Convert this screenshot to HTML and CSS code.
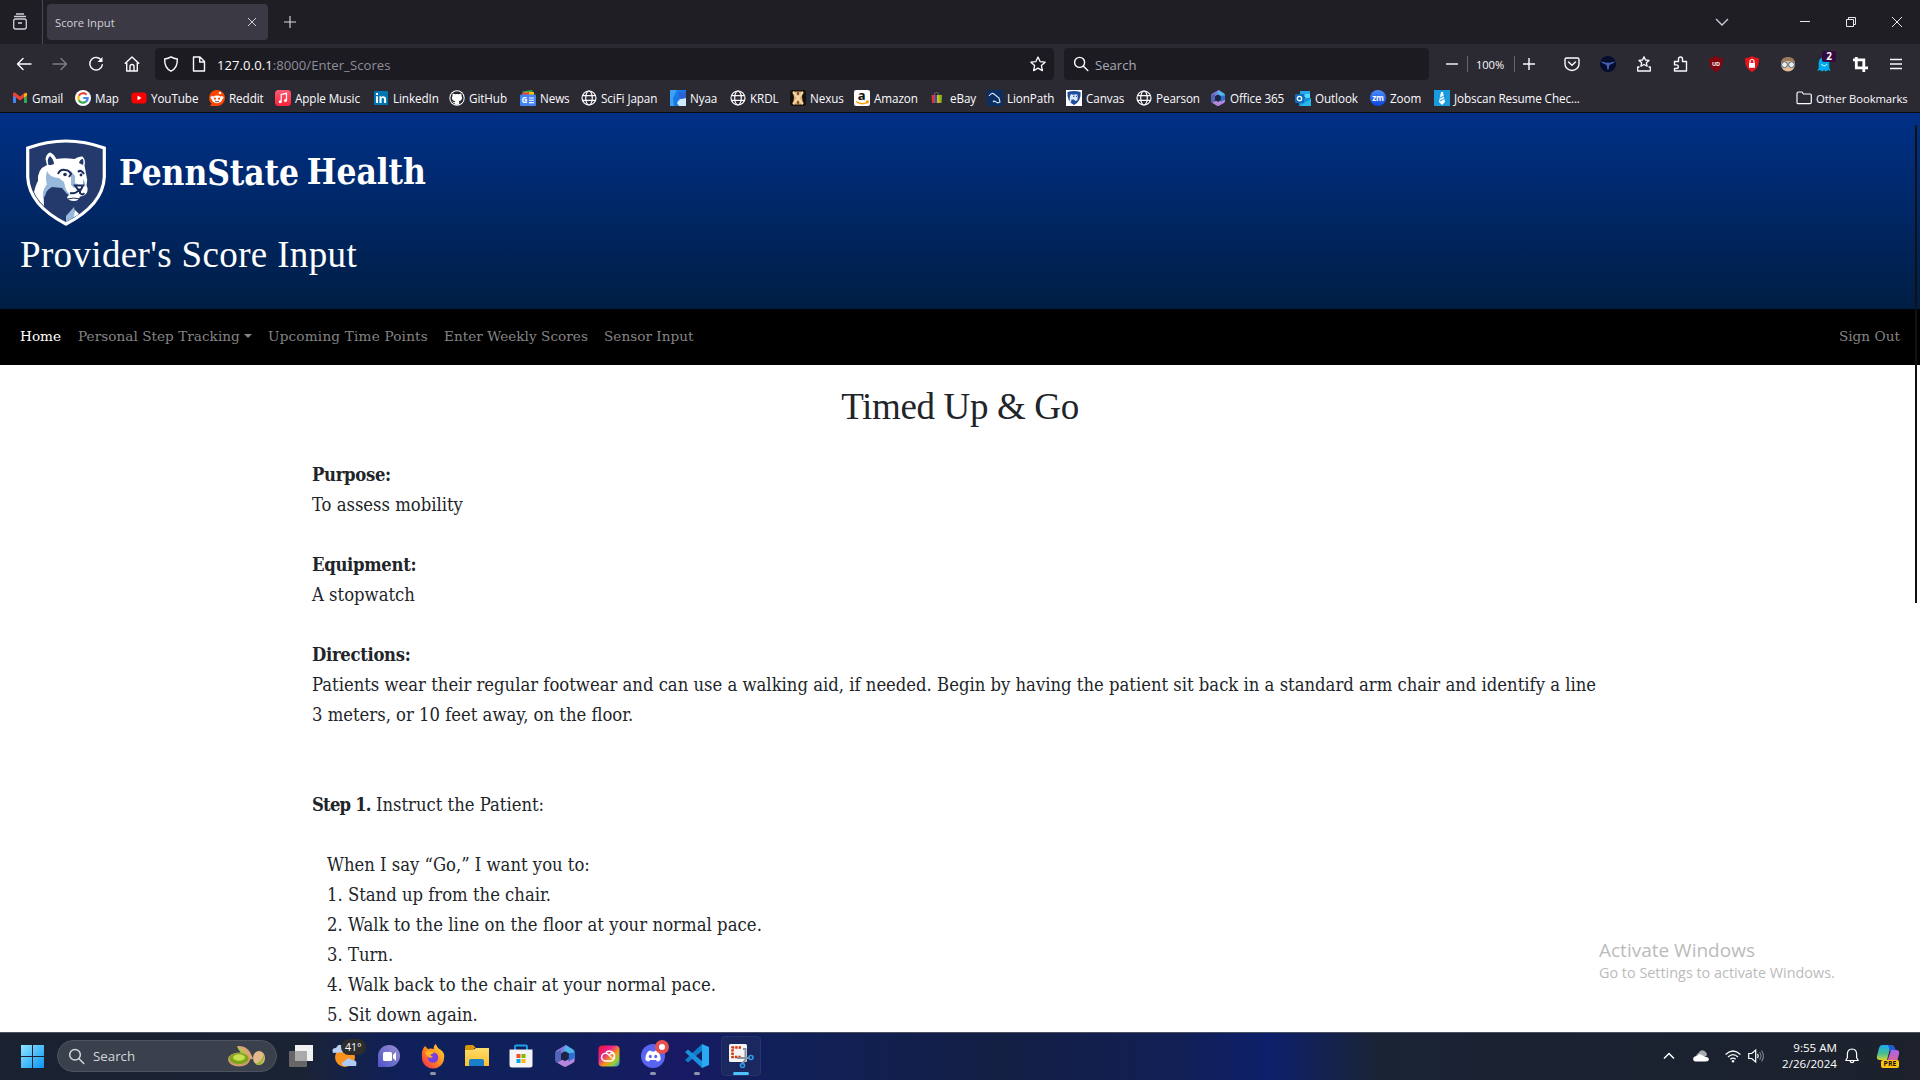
FILE: index.html
```html
<!DOCTYPE html>
<html lang="en">
<head>
<meta charset="utf-8">
<title>Score Input</title>
<link rel="stylesheet" href="styles.css">
</head>
<body>
<svg class="defs" width="0" height="0">
  <defs>
    <linearGradient id="gWin" x1="0" y1="0" x2="1" y2="1"><stop offset="0" stop-color="#8fe6ff"/><stop offset="1" stop-color="#0a93f5"/></linearGradient>
    <linearGradient id="gChat" x1="1" y1="0" x2="0" y2="1"><stop offset="0" stop-color="#9a8fd0"/><stop offset="1" stop-color="#4c55c8"/></linearGradient>
    <linearGradient id="gFox" x1="1" y1="0" x2="0" y2="1"><stop offset="0" stop-color="#ffe23c"/><stop offset=".5" stop-color="#ff8a1d"/><stop offset="1" stop-color="#f5205a"/></linearGradient>
    <linearGradient id="gFold" x1="0" y1="0" x2="0" y2="1"><stop offset="0" stop-color="#ffdc6b"/><stop offset="1" stop-color="#fbbf2d"/></linearGradient>
    <linearGradient id="gCC" x1="0" y1="0" x2="1" y2="1"><stop offset="0" stop-color="#f0122d"/><stop offset=".35" stop-color="#e8238e"/><stop offset=".6" stop-color="#f59a1b"/><stop offset=".8" stop-color="#8ed13a"/><stop offset="1" stop-color="#2f7df0"/></linearGradient>
    <linearGradient id="gAM" x1="0" y1="0" x2="0" y2="1"><stop offset="0" stop-color="#fb5c74"/><stop offset="1" stop-color="#fa233b"/></linearGradient>
    <linearGradient id="gZm" x1="0" y1="0" x2="0" y2="1"><stop offset="0" stop-color="#4a8dff"/><stop offset="1" stop-color="#0b45dd"/></linearGradient>
    <linearGradient id="gCopA" x1="0" y1="0" x2="0" y2="1"><stop offset="0" stop-color="#1ba7f0"/><stop offset=".6" stop-color="#4cc08a"/><stop offset="1" stop-color="#d6d23a"/></linearGradient>
    <linearGradient id="gCopB" x1="0" y1="0" x2="0" y2="1"><stop offset="0" stop-color="#a565f0"/><stop offset="1" stop-color="#f0607a"/></linearGradient>
    <symbol id="globe" viewBox="0 0 16 16"><g fill="none" stroke="#fbfbfe" stroke-width="1.2"><circle cx="8" cy="8" r="7"/><ellipse cx="8" cy="8" rx="3.3" ry="7"/><path d="M1.5 5.6h13M1.5 10.4h13"/></g></symbol>
    <symbol id="m365" viewBox="0 0 16 16"><path d="M8.500 0 2 3.800Q1 4.500 1 6v5q0 1 1 1.500L5 11V6.500L10.500 3V1.200z" fill="#8577dc"/><path d="M8.500 0 14 3.200q1 .8 1 2V9L11 6.500 7 4.500z" fill="#4fb4ea"/><path d="M15 8v3q0 1.200-1 1.900L9 15.700q-1 .5-2 0L2 12.700l4-2 2 1z" fill="#b586dc"/><path d="M1 5.500 5 3.500v7.500L2 12.700Q1 12 1 11z" fill="#5263b8"/><path d="M15 5.500v4L10.500 12V6z" fill="#2b6fd0"/><path d="m5.500 6 2.500-1.500L10.700 6v4L8 11.500 5.500 10z" fill="#1c2547"/></symbol>
    <symbol id="mag" viewBox="0 0 16 16"><g fill="none" stroke="currentColor" stroke-width="1.4" stroke-linecap="round"><circle cx="6.6" cy="6.4" r="5"/><path d="m10.4 10.2 4.4 4.4"/></g></symbol>
  </defs>
</svg>

<header class="chrome">
  <div class="tabstrip">
    <div class="view"><svg width="16" height="18" viewBox="0 0 16 18" fill="none" stroke="#cfcfd8" stroke-width="1.3"><rect x="1.7" y="6" width="12.6" height="10" rx="2"/><path d="M2 3.5h12M4 1h8M6 10h4"/></svg></div>
    <div class="tab"><span>Score Input</span><svg width="10" height="10" viewBox="0 0 10 10" stroke="#cfcfd8"><path d="m1 1 8 8M9 1 1 9"/></svg></div>
    <svg class="newtab" width="12" height="12" viewBox="0 0 12 12" stroke="#dcdce2" stroke-width="1.1"><path d="M6 0v12M0 6h12"/></svg>
    <div class="controls">
      <svg width="14" height="8" viewBox="0 0 14 8" fill="none" stroke="#cfcfd8" stroke-width="1.3"><path d="m1 1 6 6 6-6"/></svg>
      <svg width="10" height="10" viewBox="0 0 10 10" stroke="#e8e8ee"><path d="M0 4.5h10"/></svg>
      <svg width="10" height="10" viewBox="0 0 10 10" fill="none" stroke="#e8e8ee"><path d="M.5 2.5h7v7h-7zM2.5 2.5v-2h7v7h-2"/></svg>
      <svg width="10" height="10" viewBox="0 0 10 10" stroke="#e8e8ee"><path d="m0 0 10 10M10 0 0 10"/></svg>
    </div>
  </div>

  <div class="toolbar">
    <div class="nav-btns">
      <svg width="16" height="16" viewBox="0 0 16 16" fill="none" stroke="#fbfbfe" stroke-width="1.4" stroke-linecap="round" stroke-linejoin="round"><path d="M15 8H1.5M7 2.5 1.5 8 7 13.5"/></svg>
      <svg class="off" width="16" height="16" viewBox="0 0 16 16" fill="none" stroke="#fbfbfe" stroke-width="1.4" stroke-linecap="round" stroke-linejoin="round"><path d="M1 8h13.5M9 2.5 14.5 8 9 13.5"/></svg>
      <svg width="16" height="16" viewBox="0 0 16 16" fill="none" stroke="#fbfbfe" stroke-width="1.4" stroke-linecap="round"><path d="M13.5 4.5a6.3 6.3 0 1 0 .8 4.3"/><path d="M14.5 1v5h-5z" fill="#fbfbfe" stroke="none"/></svg>
      <svg width="16" height="16" viewBox="0 0 16 16" fill="none" stroke="#fbfbfe" stroke-width="1.4" stroke-linejoin="round"><path d="M.8 7.8 8 1l7.200 6.800M2.700 6.500V15h10.600V6.500M6 15v-4.500a2 2 0 0 1 4 0V15"/></svg>
    </div>
    <div class="field url">
      <svg width="16" height="16" viewBox="0 0 16 16" fill="none" stroke="#fbfbfe" stroke-width="1.4"><path d="M8 .8c2 1.300 4 1.900 6.300 2.200.3 5.500-1.800 10-6.300 12.200C3.500 13 1.400 8.500 1.700 3 4 2.700 6 2.100 8 .8z"/></svg>
      <svg width="16" height="16" viewBox="0 0 16 16" fill="none" stroke="#fbfbfe" stroke-width="1.4" stroke-linejoin="round"><path d="M2.500 1h6.500L13.500 5.500V15h-11zM8.700 1.200V6h4.800"/></svg>
      <p>127.0.0.1<span>:8000/Enter_Scores</span></p>
      <svg width="16" height="16" viewBox="0 0 16 16" fill="none" stroke="#fbfbfe" stroke-width="1.300" stroke-linejoin="round"><path d="m8 1 2.100 4.600 5 .6-3.700 3.400 1 5L8 12.100l-4.400 2.500 1-5L.9 6.200l5-.6z"/></svg>
    </div>
    <div class="field find"><svg width="16" height="16"><use href="#mag"/></svg><p>Search</p></div>
    <div class="zoomer">
      <svg width="12" height="12" viewBox="0 0 12 12" stroke="#fbfbfe" stroke-width="1.400"><path d="M0 6h12"/></svg><i></i><b>100%</b><i></i>
      <svg width="12" height="12" viewBox="0 0 12 12" stroke="#fbfbfe" stroke-width="1.400"><path d="M0 6h12M6 0v12"/></svg>
    </div>
    <div class="exts">
      <svg viewBox="0 0 16 16" fill="none" stroke="#fbfbfe" stroke-width="1.400" stroke-linecap="round" stroke-linejoin="round"><path d="M2.500 2h11A1.500 1.500 0 0 1 15 3.500V8A7 6.500 0 0 1 1 8V3.500A1.500 1.500 0 0 1 2.500 2zM4.500 6 8 9.300 11.500 6"/></svg>
      <svg viewBox="0 0 16 16"><circle cx="8" cy="8" r="8" fill="#060d2c"/><path d="M.8 5.500c2.500.3 4.500 1 6 1.500L8 6.300 9.200 7c1.500-.5 3.500-1.200 6-1.500-1.500 1.800-3.500 2.700-5.700 3.200L8.400 14h-.8L6.500 8.700C4.300 8.200 2.300 7.300.8 5.500z" fill="#4361b4"/></svg>
      <svg viewBox="0 0 16 16" fill="none" stroke="#fbfbfe" stroke-width="1.300" stroke-linejoin="round"><path d="m8 .8 1.500 3.200 3.500.4-2.600 2.400.7 3.400L8 8.500l-3.100 1.700.7-3.400L3 4.400 6.500 4zM3.500 11H1.700v4h12.600v-4h-1.800"/></svg>
      <svg viewBox="0 0 16 16" fill="none" stroke="#fbfbfe" stroke-width="1.400" stroke-linejoin="round"><path d="M2.500 5.500h4V3a2 2 0 0 1 4 0v2.500h4V15h-12v-2.500h2a1.800 1.800 0 0 0 0-3.600h-2z"/></svg>
      <svg viewBox="0 0 16 16"><path d="M8 0c2.300 1.400 4.500 2 7 2.200C15 9 13 13.500 8 16 3 13.500 1 9 1 2.200 3.500 2 5.700 1.400 8 0z" fill="#800610"/><text x="8" y="10" class="ub">UD</text></svg>
      <svg viewBox="0 0 16 16"><path d="M8 0c2.300 1.400 4.500 2 7 2.200C15 9 13 13.500 8 16 3 13.500 1 9 1 2.200 3.500 2 5.700 1.400 8 0z" fill="#e8141c"/><rect x="5" y="7" width="6" height="4.800" fill="#fff"/><path d="M6 7V5.500a2 2 0 0 1 4 0V7" fill="none" stroke="#fff" stroke-width="1.200"/></svg>
      <svg viewBox="0 0 16 16"><circle cx="8" cy="8.500" r="7" fill="#e8bc96"/><path d="M1 7.500C1 3 4 1 8 1s7 2 7 6.500L12 5H5z" fill="#9a7c5c"/><circle cx="4.500" cy="8.700" r="2.900" fill="#e9f2f6" stroke="#53636e"/><circle cx="11.500" cy="8.700" r="2.900" fill="#e9f2f6" stroke="#53636e"/></svg>
      <div class="ghost"><svg viewBox="0 0 16 16"><path d="M8 1.500c4 0 5.300 2.500 5.300 6.500V12l1.500 3-2.800-1-2 1.500-2-1.300-2 1.300L4 14l-2.800 1 1.500-3V8c0-4 1.300-6.500 5.300-6.500z" fill="#00aef0"/><path d="M5.500 8c1.500 2.500 4 2.500 5.500 0" fill="none" stroke="#fff"/></svg><em>2</em></div>
      <svg viewBox="0 0 16 16" fill="none" stroke="#fff" stroke-width="2.800"><path d="M1 3.800h10.800V16M4.300 1v10.800H16"/></svg>
      <svg viewBox="0 0 16 16" stroke="#fbfbfe" stroke-width="1.300"><path d="M2 3.500h12M2 8h12M2 12.500h12"/></svg>
    </div>
  </div>

  <div class="bookmarks">
    <a><svg viewBox="0 0 16 16"><path d="M1 3.500h3V13H1z" fill="#4285f4"/><path d="M12 3.500h3V13h-3z" fill="#34a853"/><path d="M1 3 3 2.500l5 4 5-4L15 3v2.500L8 10.500 1 5.500z" fill="#ea4335"/><path d="M12 4v3.500l3-2V3z" fill="#fbbc04"/></svg>Gmail</a>
    <a><svg viewBox="0 0 16 16"><circle cx="8" cy="8" r="8" fill="#fff"/><g fill="none" stroke-width="2.200"><path d="M11.500 4.700A4.700 4.700 0 0 0 3.900 5.800" stroke="#ea4335"/><path d="M3.900 5.800a4.700 4.700 0 0 0 0 4.400" stroke="#fbbc04"/><path d="M3.900 10.200a4.700 4.700 0 0 0 7 1.500" stroke="#34a853"/><path d="M10.900 11.700A4.700 4.700 0 0 0 12.700 8H8.200" stroke="#4285f4"/></g></svg>Map</a>
    <a><svg viewBox="0 0 16 16"><rect x=".5" y="2.500" width="15" height="11" rx="3" fill="#f00"/><path d="m6.500 5.600 4 2.400-4 2.400z" fill="#fff"/></svg>YouTube</a>
    <a><svg viewBox="0 0 16 16"><path d="M8 0a8 8 0 1 1 0 16H1l1.500-2.300A8 8 0 0 1 8 0z" fill="#ff4500"/><ellipse cx="8" cy="9.300" rx="5.200" ry="3.900" fill="#fff"/><circle cx="3" cy="7.500" r="1.500" fill="#fff"/><circle cx="13" cy="7.500" r="1.500" fill="#fff"/><circle cx="11" cy="3" r="1.300" fill="#fff"/><circle cx="5.900" cy="8.700" r="1.100" fill="#ff4500"/><circle cx="10.100" cy="8.700" r="1.100" fill="#ff4500"/><path d="M6 11.200q2 1.200 4 0" stroke="#333" fill="none" stroke-width=".8"/></svg>Reddit</a>
    <a><svg viewBox="0 0 16 16"><rect width="16" height="16" rx="3.500" fill="url(#gAM)"/><path d="M6.200 11.500V4.500l5.300-1.200v7" fill="none" stroke="#fff" stroke-width="1.200"/><circle cx="5.200" cy="11.700" r="1.500" fill="#fff"/><circle cx="10.500" cy="10.500" r="1.500" fill="#fff"/></svg>Apple Music</a>
    <a><svg viewBox="0 0 16 16"><rect x="1" y="1" width="14" height="14" rx="1" fill="#0077b5"/><path d="M3 6.300h2V13H3zM3 3h2v2H3zM6.500 6.300h1.900v.9c1-1.600 4.700-1.600 4.700 1.800v4h-2V9.500c0-2-2.600-1.800-2.600 0V13h-2z" fill="#fff"/></svg>LinkedIn</a>
    <a><svg viewBox="0 0 16 16"><circle cx="8" cy="8" r="7.700" fill="#fff"/><circle cx="8" cy="8" r="6.700" fill="#24242c"/><path d="M3.800 3.500 6 4.300a8 8 0 0 1 4 0l2.200-.8c.5 1 .3 2 .2 2.400 1.500 2 .3 5-2.600 5.200.5.6.4 2 .4 3.600H5.800v-1.600c-2 .3-1.900-1.300-3-1.800 1.200-.2 1.500 1.300 3 .8 0-.4.200-.8.400-1-2.900-.3-4.100-3.200-2.600-5.200-.1-.4-.3-1.400.2-2.400z" fill="#fff"/></svg>GitHub</a>
    <a><svg viewBox="0 0 16 16"><path d="M2.500 1.500 12 0l2 5H3z" fill="#34a853"/><path d="M5 2h9v4H5z" fill="#fbbc04"/><path d="m2 3 7-1v4H2z" fill="#ea4335"/><rect y="4.500" width="16" height="11.500" rx="1" fill="#4285f4"/><text x="1.500" y="13" class="gn">G</text><path d="M9 8h5M9 10.300h5M9 12.600h5" stroke="#fff" stroke-width="1.100"/></svg>News</a>
    <a><svg><use href="#globe"/></svg>SciFi Japan</a>
    <a><svg viewBox="0 0 16 16"><path fill="#1a78e8" d="M0 0h16v16H0z"/><path d="M0 0h7L3 8l1 8H0z" fill="#3aa4f0"/><path d="m9 2 4 1 3-2v8l-5 1-2-4z" fill="#2a62d0"/><path d="M7 13q3-5 5-4l4-1v8H9z" fill="#cdeafd"/></svg>Nyaa</a>
    <a><svg><use href="#globe"/></svg>KRDL</a>
    <a><svg viewBox="0 0 16 16"><rect width="16" height="16" rx="3" fill="#15110c"/><path d="M3 1.500h10l-1 5 1 8H3l1-7z" fill="#dcae72"/><path d="m3 2 10 12M13 2 3 14" stroke="#f2d3a2" stroke-width="2.200"/><path d="M8 2v3M8 11v3" stroke="#5d4222" stroke-width="1.500"/></svg>Nexus</a>
    <a><svg viewBox="0 0 16 16"><rect width="16" height="16" rx="2" fill="#fff"/><text x="3.800" y="10" class="am">a</text><path d="M2 11.500c4 3 8 3 12 .3M12 11.300h2.200l-.4 2" fill="none" stroke="#f90" stroke-width="1.500"/></svg>Amazon</a>
    <a><svg viewBox="0 0 16 16"><path d="M4.500 5V3.500q2.300-2 4.500 0V5" stroke="#666" fill="none"/><path d="M1.500 5H5v8H2z" fill="#e53238"/><path d="M5 5h2v8H5z" fill="#0064d2"/><path d="M7 5h2v8H7z" fill="#f5af02"/><path d="M9 5h3l-.5 8H9z" fill="#86b817"/></svg>eBay</a>
    <a><svg viewBox="0 0 16 16"><path fill="#0a2d62" d="M0 0h16v16H0z"/><path d="M2 6q3-4 5-2l5 4 1 4-2 1-4-2-1 1" fill="none" stroke="#dbe6f5" stroke-width="1.100"/></svg>LionPath</a>
    <a><svg viewBox="0 0 16 16"><path fill="#fff" d="M0 0h16v16H0z"/><path d="M1.500 2q6.500-2 13 0 1 9-6.500 13Q.5 11 1.500 2z" fill="#1e4d9a"/><path d="m3.500 11 .5-5 1-2 2 .7 4-.5.700 2-.200 4-2 .800-2-1.500-2 0-.5 3z" fill="#dbe8f6"/><path d="M7 6.300h1.500M10 6.300h1" stroke="#1e4d9a"/></svg>Canvas</a>
    <a><svg><use href="#globe"/></svg>Pearson</a>
    <a><svg><use href="#m365"/></svg>Office 365</a>
    <a><svg viewBox="0 0 16 16"><path d="M5 1h10v6H5z" fill="#28a8ea"/><path d="M10 4h5v5h-5z" fill="#50d9ff"/><path d="M4 8h12v8H4z" fill="#1490df"/><path d="m4 16 12-7v7z" fill="#28b8f0"/><rect y="4" width="9" height="9" rx="1" fill="#0f6cbd"/><circle cx="4.500" cy="8.500" r="2.200" fill="none" stroke="#fff" stroke-width="1.300"/></svg>Outlook</a>
    <a><svg viewBox="0 0 16 16"><circle cx="8" cy="8" r="8" fill="url(#gZm)"/><text x="8" y="10.500" class="zm">zm</text></svg>Zoom</a>
    <a><svg viewBox="0 0 16 16"><path fill="#1a9be0" d="M0 0h16v16H0z"/><path d="M7 2h2l.5 2.500L11 12l-3 3-3-3 1.500-7.500z" fill="#fff"/><path d="m6 8 4-2M6 11l4.500-2.500" stroke="#1a9be0"/></svg>Jobscan Resume Chec...</a>
    <a class="other"><svg viewBox="0 0 16 16" fill="none" stroke="#fbfbfe" stroke-width="1.200"><path d="M1 3.500q0-1.500 1.500-1.500H6l1.500 2H14q1.300 0 1.300 1.300v7q0 1.400-1.300 1.400H2.300Q1 13.700 1 12.400z"/></svg>Other Bookmarks</a>
  </div>
</header>

<main class="page">
  <div class="banner">
    <div class="brand">
      <svg width="80" height="87" viewBox="0 0 80 87">
        <path d="M1.700 9Q40-5 78.300 9V38Q77 66 40 85 3 66 1.700 38z" fill="#253a6c" stroke="#fff" stroke-width="3.200"/>
        <path d="M19.500 20q1-6 5-6.500 4 2 6 6.500 8-1.500 18 0 4-3 8-2.500 3.500 4 2 9l1.500 8q2 6 .5 12 2.500 5-.5 8.500-3 2.500-6 2.500-1.500 4.500-6 4.500-6 0-7-4l2-2-5-8-4-4-9-2q-6 4-7.500 12l.5 13Q11 60 8 53q2-8 4-11-1-12 9-16z" fill="#fff"/>
        <path d="M21 32q3 7 12 7l5 4 2 8 4 5-3-1-5-6-10-1q-6 3-7 9l-2 2q-1-8 4-13-2-7 0-14z" fill="#97b9dc"/>
        <path d="m45 32 4 5 0 7 4 2-5 3-3-3z" fill="#97b9dc"/>
        <path d="M57 40q3 4 2 8l-2-2z" fill="#97b9dc"/>
        <path d="M40 83V77l8-9 1 5 3 3z" fill="#97b9dc"/><path d="m48 78 1-7 4 4z" fill="#fff"/>
        <path d="M22.500 26q-2-6 1.500-9 3.500 3 4 8l-3 1zM53 24q1-4 4-4 1 3 0 6z" fill="#253a6c"/>
        <path d="M32 35q2-5 7-4 4 0 6 4l-2 3M52 33q3-3 6 2M49 46.500h8l-2 4h-3zM44 54q6 1 9-3M54 50v4q3 3 4 0" fill="none" stroke="#1b2c5c" stroke-width="2"/>
        <path d="M42 60q5-2 12 0" fill="none" stroke="#1b2c5c" stroke-width="1"/>
        <circle cx="39" cy="35.500" r="1.800" fill="#1b2c5c"/><circle cx="55" cy="36" r="1.400" fill="#1b2c5c"/>
      </svg>
      <div class="wordmark"><span>PennState</span> <span class="up">Health</span></div>
    </div>
    <h1>Provider's Score Input</h1>
  </div>
  <nav class="menu">
    <a class="on">Home</a><a class="drop">Personal Step Tracking</a><a class="points">Upcoming Time Points</a><a>Enter Weekly Scores</a><a>Sensor Input</a><a class="out">Sign Out</a>
  </nav>
  <section class="content">
    <h2>Timed Up &amp; Go</h2>
    <div class="prose">
      <p><strong>Purpose:</strong><br>To assess mobility</p>
      <p><strong>Equipment:</strong><br>A stopwatch</p>
      <p><strong>Directions:</strong><br>Patients wear their regular footwear and can use a walking aid, if needed. Begin by having the patient sit back in a standard arm chair and identify a line<br>3 meters, or 10 feet away, on the floor.</p>
      <p class="step"><strong>Step 1.</strong> Instruct the Patient:</p>
      <div class="say">
        <div>When I say “Go,” I want you to:</div>
        <div>1. Stand up from the chair.</div>
        <div class="wide">2. Walk to the line on the floor at your normal pace.</div>
        <div>3. Turn.</div>
        <div class="wide">4. Walk back to the chair at your normal pace.</div>
        <div>5. Sit down again.</div>
      </div>
    </div>
  </section>
  <div class="thumb"></div>
  <div class="activate"><div>Activate Windows</div><p>Go to Settings to activate Windows.</p></div>
</main>

<footer class="taskbar">
  <svg class="start" width="24" height="24" viewBox="0 0 24 24"><path d="M1 1h11v11H1zM13 1h11v11H13zM1 13h11v11H1zM13 13h11v11H13z" fill="url(#gWin)"/></svg>
  <div class="pill"><svg width="17" height="17"><use href="#mag" width="17" height="17"/></svg><span>Search</span>
    <svg width="40" height="24" viewBox="0 0 40 24"><path d="M10 2q12-1 16 13l-8 1z" fill="#d9a775"/><path d="M10 3q8 3 12 12l-6-3z" fill="#a9c93c"/><ellipse cx="12" cy="15.500" rx="11" ry="7" fill="#cf9c6a"/><ellipse cx="12" cy="14.500" rx="9.500" ry="5.500" fill="#7da51c"/><ellipse cx="12" cy="13.500" rx="6" ry="3.300" fill="#c9e04e"/><ellipse cx="32" cy="14" rx="6" ry="7" fill="#e3b98a"/><path d="M28 20q7-2 9-10 1 9-6 11z" fill="#93b82c"/></svg>
  </div>
  <div class="apps">
    <div><svg viewBox="0 0 24 24"><rect y="7" width="18" height="16" rx="1" fill="#666"/><path d="M6 1h18v16H6z" fill="#f1f1f1"/><path d="M6 7h12v10H6z" fill="#aaa"/></svg></div>
    <div class="weather"><svg viewBox="0 0 24 24"><circle cx="12" cy="13" r="10" fill="#f7931e"/><path d="M0 9q-2-5 3-5 3-6 7-1l4 5z" fill="#b8d0f5"/><path d="M10 22q-3-4 2-5 3-5 7-1 6 0 4 6z" fill="#aecbf7"/></svg><em>41°</em></div>
    <div><svg viewBox="0 0 24 24"><path d="M12 1a11 11 0 1 1 0 22H1V12A11 11 0 0 1 12 1z" fill="url(#gChat)"/><rect x="6" y="8" width="9" height="9" rx="1.500" fill="#fff"/><path d="m16 11 3-3v9l-3-3z" fill="#fff"/></svg></div>
    <div class="run"><svg viewBox="0 0 24 24"><path d="M15 0q1 4 5 6 4 3 3 8a11 10.500 0 0 1-22 0Q0 6 4 2l3 3q3-1 6 0-1-3 2-5z" fill="url(#gFox)"/><circle cx="12" cy="13.500" r="5.300" fill="#7a3fe0"/><path d="M4 8q5-3 9 1l-4 2 3 2q-5 3-8-5z" fill="#ffb11f"/></svg></div>
    <div><svg viewBox="0 0 24 24"><path d="M0 3q0-2 2-2h6l3 3h-2v5H0z" fill="#d69508"/><path d="M0 6h8l3-2h13v18H0z" fill="url(#gFold)"/><path d="M4 22v-5q0-2 2-2h11q2 0 2 2v5z" fill="#1a7ec8"/></svg></div>
    <div><svg viewBox="0 0 24 24"><path d="M6 7V2.500Q6 1.500 7 1.500h10q1 0 1 1V7" fill="none" stroke="#1ea0ea" stroke-width="1.800"/><path d="M.5 5.500h23V21q0 2.500-2.500 2.500H3Q.5 23.500.500 21z" fill="#f4f4f6"/><path d="M7.500 10h4v4h-4z" fill="#f25022"/><path d="M12.500 10h4v4h-4z" fill="#7fba00"/><path d="M7.500 15h4v4h-4z" fill="#00a4ef"/><path d="M12.500 15h4v4h-4z" fill="#ffb900"/></svg></div>
    <div><svg viewBox="0 0 24 24"><use href="#m365" x="1" y="1" width="22" height="22"/></svg></div>
    <div><svg viewBox="0 0 24 24"><rect x="1.500" y="1.500" width="21" height="21" rx="4" fill="url(#gCC)"/><g fill="none" stroke="#fff" stroke-width="1.400" stroke-linecap="round"><path d="M9.500 7.800A5 5 0 1 1 15 17H8.500a3.900 3.900 0 1 1 2.600-6.800l3 2.900"/><path d="M15 14.500a2.600 2.600 0 1 0-2-4.300"/></g></svg></div>
    <div class="run"><svg viewBox="0 0 24 24"><circle cx="12" cy="12" r="12" fill="#5865f2"/><path d="M7 7.500q2-1 3-1l.5 1h3l.5-1q1 0 3 1 3 4 2.500 8.500-2 1.500-3.500 1.500l-1-1.500H9L8 17.500q-1.500 0-3.500-1.500Q4 11.500 7 7.500z" fill="#fff"/><ellipse cx="9.300" cy="12.500" rx="1.500" ry="1.700" fill="#5865f2"/><ellipse cx="14.700" cy="12.500" rx="1.500" ry="1.700" fill="#5865f2"/></svg><u></u></div>
    <div class="run"><svg viewBox="0 0 24 24"><path d="M17 0 24 3v18l-7 3z" fill="#2aa9f3"/><path d="M17 0v7L3 18.500 0 16z" fill="#0f7bc9"/><path d="M17 24v-7L3 5.500 0 8z" fill="#1a8fdc"/></svg></div>
    <div class="live"><svg viewBox="0 0 24 24"><rect width="18" height="18" rx="1.500" fill="#f4f4f4"/><path d="M12 3.500H3.500V13h9" fill="none" stroke="#d4380d" stroke-width="2.600" stroke-dasharray="2.400 1"/><path d="M14 5h2.500v11l-4 4M8 14h12" fill="none" stroke="#8b9199" stroke-width="2"/><g fill="none" stroke="#2e9be6" stroke-width="1.600"><circle cx="22" cy="13.500" r="2"/><circle cx="13.500" cy="21.500" r="2"/></g></svg></div>
  </div>
  <div class="tray">
    <svg width="12" height="8" viewBox="0 0 12 8" fill="none" stroke="#fff" stroke-width="1.500"><path d="m1 6.500 5-5 5 5"/></svg>
    <svg width="16" height="12" viewBox="0 0 16 12"><path d="M3 7Q3 4 5.500 3q2-4 6-2 2.500 1.500 2.500 4l-3 3z" fill="#a9abb0"/><path d="M2.500 11.500Q0 11 0 8.500 1 5.500 4 6q2-3 5-1l3 2q3.500-.5 4 2.200-.3 2.300-3 2.300z" fill="#fff"/></svg>
    <svg width="16" height="13" viewBox="0 0 16 13" fill="none" stroke="#fff" stroke-width="1.200"><path d="M.6 4.500q7.400-7 14.800 0M3 7q5-4.700 10 0M5.300 9.300q2.700-2.500 5.400 0"/><circle cx="8" cy="11.300" r="1.200" fill="#fff" stroke="none"/></svg>
    <svg class="vol" width="17" height="14" viewBox="0 0 17 14" fill="none" stroke="#fff" stroke-width="1.200"><path d="M.7 4.500h3l4-3.500v12l-4-3.500h-3z"/><path d="M9.500 4.800q1.500 2.200 0 4.400"/><path d="M11.500 3q3 4 0 8M13.500 1.500q4 5.500 0 11" stroke="#777c86"/></svg>
    <div class="clock">9:55 AM<br>2/26/2024</div>
    <svg width="14" height="16" viewBox="0 0 14 16" fill="none" stroke="#fff" stroke-width="1.200" stroke-linejoin="round"><path d="M7 1q4.600.3 4.600 5v3.500l1.600 3H.8l1.600-3V6Q2.400 1.300 7 1zM5 12.700q.3 2 2 2t2-2"/></svg>
    <div class="copilot"><svg width="24" height="24" viewBox="0 0 24 24"><path d="M6 1h9l-4 15H4q-4 0-3-4l2-8q1-3 3-3z" fill="url(#gCopA)"/><path d="M12 1h4q2 0 3 3l1 3-6 0z" fill="#1b5fd0"/><path d="M15 6h5q4 0 3 4l-2 8q-1 3-3 3h-8z" fill="url(#gCopB)"/></svg><em>PRE</em></div>
  </div>
</footer>
</body>
</html>
```
FILE: styles.css
```css
* { box-sizing: border-box; }
body { margin: 0; width: 1920px; height: 1080px; overflow: hidden; display: flex; flex-direction: column; background: #fff; font-family: "Open Sans", sans-serif; }
p, h1, h2 { margin: 0; font-weight: 400; }
svg { display: block; flex: none; overflow: visible; }
em, i, b, u { font-style: normal; font-weight: 400; text-decoration: none; }
.defs { height: 0; }

/* browser chrome */
.chrome { flex: none; height: 113px; background: #2b2a33; border-bottom: 1px solid #0c0c0d; color: #fbfbfe; }
.tabstrip { height: 44px; background: #1f1e25; display: flex; align-items: center; }
.view { width: 43px; height: 44px; border-right: 1px solid #4a4953; display: flex; align-items: center; padding-left: 12px; margin-right: 4px; }
.tab { width: 221px; height: 36px; border-radius: 4px; background: #3a3944; display: flex; align-items: center; justify-content: space-between; padding: 0 11px 0 8px; font-size: 11.200px; color: #d3d3da; }
.newtab { margin-left: 16px; }
.controls { margin-left: auto; display: grid; grid-template-columns: 81px 46px 46px 28px; align-items: center; }
.controls svg:first-child { margin-left: -4px; }
.toolbar { height: 40px; display: flex; align-items: center; }
.nav-btns { width: 155px; display: flex; gap: 20px; padding-left: 16px; }
.off { opacity: .4; }
.field { height: 32px; border-radius: 4px; background: #1c1b22; display: flex; align-items: center; font-size: 13.100px; color: #fbfbfe; }
.url { width: 899px; padding: 0 8px 0 8px; gap: 12px; }
.url p { flex: 1; margin-left: -2px; padding-top: 1px; letter-spacing: .05px; }
.url span { color: #8f8f9a; }
.find { width: 365px; margin-left: 10px; padding-left: 9px; gap: 6px; }
.find p { color: #a9a9b3; padding-top: 1px; }
.zoomer { display: flex; align-items: center; margin-left: 17px; width: 118px; }
.zoomer i { width: 1px; height: 16px; background: #66656f; margin: 0 8px 0 9px; }
.zoomer b { font-size: 11.200px; letter-spacing: -.1px; width: 28px; }
.zoomer b + i { margin-left: 10px; }
.exts { display: flex; gap: 20px; }
.exts svg { width: 16px; height: 16px; }
.ghost { position: relative; }
.ghost em { position: absolute; left: 6px; top: -5px; width: 14px; height: 11px; border-radius: 2px; background: #330a40; font: bold 10px/11px "Open Sans", sans-serif; text-align: center; }
.ub { font: bold 5.500px "Open Sans", sans-serif; fill: #fff; text-anchor: middle; }
.gn { font: bold 8px "Open Sans", sans-serif; fill: #fff; }
.am { font: bold 13px "Open Sans", sans-serif; fill: #111; }
.zm { font: bold 8px "Open Sans", sans-serif; fill: #fff; text-anchor: middle; }
.bookmarks { height: 28px; padding-left: 12px; display: grid; align-items: center; grid-template-columns: 63px 56px 78px 66px 98px 76px 71px 61px 89px 60px 60px 64px 76px 57px 79px 70px 74px 85px 75px 64px 362px 1fr; }
.bookmarks a { display: flex; align-items: center; gap: 4px; font-size: 11.700px; letter-spacing: -.1px; white-space: nowrap; }
.bookmarks svg { width: 16px; height: 16px; }
.bookmarks .other { font-size: 11.300px; }

/* web page */
.page { flex: none; height: 919px; overflow: hidden; position: relative; font-family: "Liberation Serif", serif; color: #212529; }
.banner { height: 196px; background: linear-gradient(#003087, #001e44); color: #fff; padding: 26px 20px 0; }
.brand { display: flex; height: 94px; padding-left: 6px; }
.wordmark { font: bold 35px/42px "DejaVu Serif Condensed", "DejaVu Serif", serif; font-stretch: condensed; letter-spacing: -.1px; word-spacing: -3px; white-space: nowrap; margin: 13px 0 0 13px; }
.up { position: relative; top: -1.500px; }
h1 { font-size: 37px; line-height: 44px; letter-spacing: .35px; }
.menu { height: 56px; background: #000; display: grid; grid-template-columns: 58px 190px 176px 160px 1fr auto; align-items: center; padding: 0 20px 3px; font-family: "DejaVu Serif", serif; font-size: 13.600px; letter-spacing: .04px; color: #848484; white-space: nowrap; }
.menu .on { color: #fff; }
.menu .points { letter-spacing: .2px; }
.drop { display: flex; align-items: center; gap: 4px; }
.drop::after { content: ""; border: 4px solid transparent; border-top-color: #848484; border-bottom: 0; }
.content { padding-top: 20px; }
h2 { font-size: 37px; line-height: 44px; letter-spacing: -.35px; text-align: center; }
.prose { padding: 31px 0 0 312px; font-family: "DejaVu Serif Condensed", "DejaVu Serif", serif; font-stretch: condensed; font-size: 18.300px; line-height: 30px; white-space: nowrap; }
.prose p { margin-bottom: 30px; }
.prose strong { letter-spacing: -.3px; }
.prose .step { margin-top: 60px; }
.prose .step strong { letter-spacing: -.8px; }
.say { padding-left: 15px; }
.wide { letter-spacing: .06px; }
.thumb { position: absolute; left: 1915px; top: 12px; width: 2px; height: 478px; background: #111; }
.activate { position: absolute; left: 1599px; top: 824px; font-family: "Open Sans", sans-serif; color: #bbb; white-space: nowrap; }
.activate div { font-size: 19px; line-height: 26px; }
.activate p { font-size: 14.400px; line-height: 20px; }

/* taskbar */
.taskbar { flex: none; height: 48px; border-top: 1px solid #4b5160; background: linear-gradient(90deg, #1a2130 0, #1a2334 300px, #0f205a 400px, #10205a 560px, #181a64 680px, #10205a 770px, #141f44 1000px, #111f55 1180px, #0d1f6b 1270px, #1a2334 1380px, #1c212c 100%); display: flex; align-items: center; padding-bottom: 1px; color: #fff; }
.start { margin-left: 20px; }
.pill { margin-left: 13px; width: 220px; height: 32px; border-radius: 16px; background: #3a404c; border: 1px solid #4d535f; display: flex; align-items: center; padding: 0 9px 0 10px; font-size: 13.300px; color: #d5d7db; }
.pill span { margin-left: 8px; flex: 1; }
.apps { display: flex; gap: 4px; margin-left: 4px; }
.apps > div { width: 40px; height: 40px; display: grid; place-items: center; position: relative; border-radius: 4px; }
.apps svg { width: 24px; height: 24px; }
.weather em { position: absolute; left: 16px; top: 3px; height: 16px; padding: 0 4px; border-radius: 8px; background: #2d2d2d; font-size: 10.500px; line-height: 16px; }
.run::after, .live::after { content: ""; position: absolute; left: 17px; bottom: 1px; width: 6px; height: 3px; border-radius: 2px; background: #9095ad; }
.apps > .live { background: #1b2860; border: 1px solid #28336c; place-content: center; }
.live svg { margin-top: -1px; }
.live::after { left: 11px; bottom: 0; width: 16px; background: #4cc2ff; }
.apps u { position: absolute; left: 22px; top: 4px; width: 14px; height: 14px; border-radius: 50%; border: 4px solid #e8504f; background: #fff; }
.tray { margin-left: auto; display: grid; grid-template-columns: 30px 32px 24px 26px 62px 8px 14px 18px 43px; grid-auto-flow: column; align-items: center; }
.vol { margin-left: -1px; }
.clock { font-size: 11.600px; line-height: 16px; text-align: right; white-space: nowrap; }
.tray > svg:nth-of-type(5) { grid-column: 7; }
.copilot { grid-column: 9; position: relative; margin-left: -1px; }
.copilot em { position: absolute; left: 5px; top: 16px; width: 18px; height: 8px; border-radius: 2px; background: #ffc20e; color: #111; font: bold 7px/8px "Open Sans", sans-serif; text-align: center; }
```
